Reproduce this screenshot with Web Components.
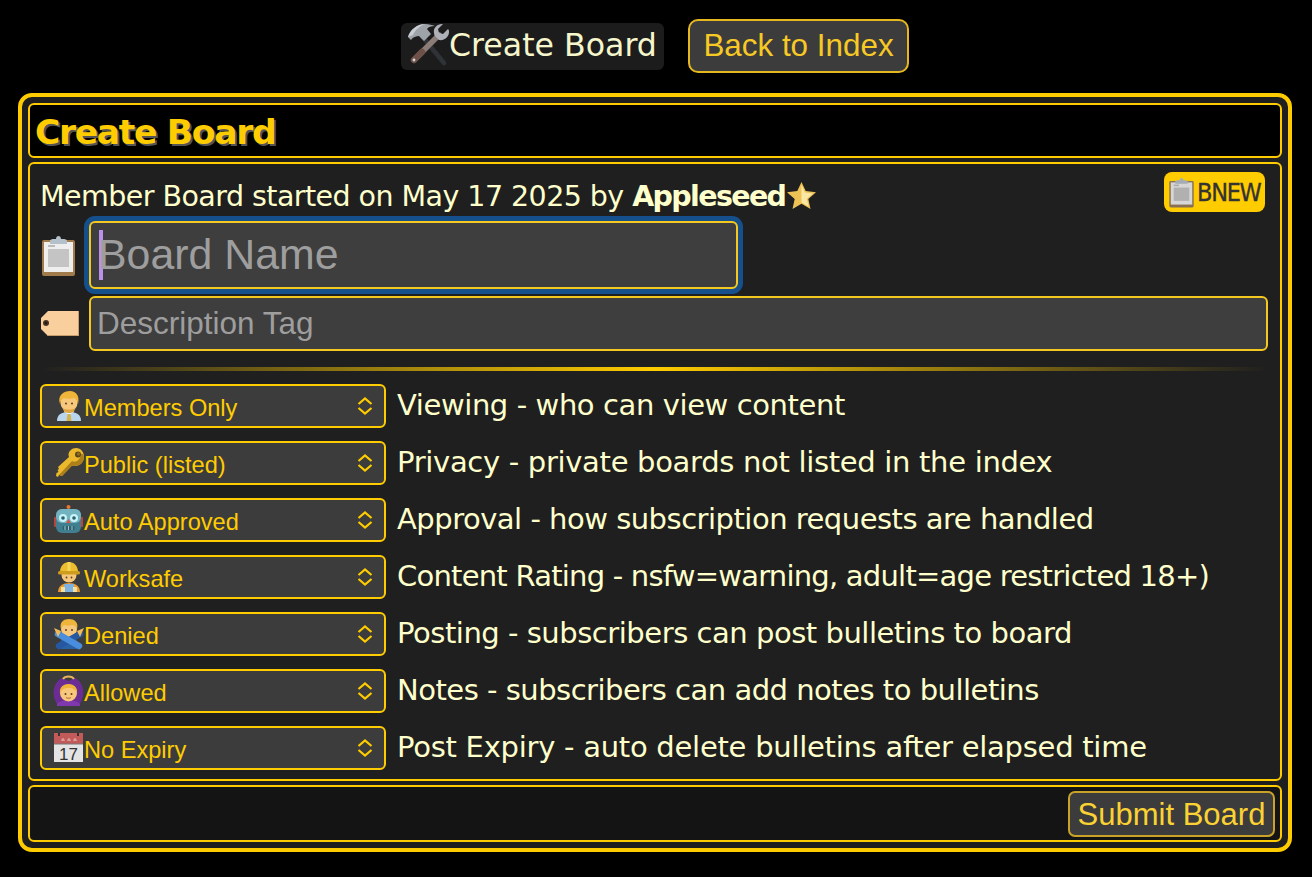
<!DOCTYPE html>
<html lang="en">
<head>
<meta charset="utf-8">
<title>Create Board</title>
<style>
  html, body { margin: 0; background: #000; }
  body { font-family: "DejaVu Sans", sans-serif; color: #ffffcc; }
</style>
</head>
<body>
<board-page></board-page>
<script>
const skin = '#f7c77c', hair = '#eeb53a', eye = '#5a3d22';
const icons = {
  tools: `<path d="M13 11l23 28" stroke="#2f3236" stroke-width="4.500" stroke-linecap="round"/>
    <path d="M0 13C2 6 9 0 17 0c4 0 7 1 10 2-4 0-7 1-8 3l4 5-7 7-5-5c-3 0-6 1-8 4z" fill="#9ea3aa"/><path d="M0 13C2 6 9 0 17 0c-5 2-10 6-12 11z" fill="#c9cdd2"/>
    <path d="M31 11L6 36" stroke="#8b7c78" stroke-width="5.500" stroke-linecap="round"/><path d="M14 28L6 36" stroke="#6d5148" stroke-width="6.500" stroke-linecap="round"/><circle cx="6" cy="36" r="1.400" fill="#d8d8d8"/>
    <path d="M34 0c-5 0-9 4-8 9 0 2 1 3 2 4l3 3c5 1 10-3 10-8 0-1 0-2-1-3l-5 5-4-1-1-4 5-5c0 0-1 0-1 0z" fill="#aeb2b8"/>`,
  clipboard: `<rect x="1" y="5" width="33" height="36" rx="2" fill="#a27b4c"/><rect x="3" y="7" width="29" height="30" fill="#eeeeee"/><rect x="7" y="14" width="21" height="18" fill="#c4c4c4"/><rect x="7" y="10" width="7" height="2" fill="#bbb"/><path d="M9 9V6c0-1 1-2 3-2h3c0-4 5-4 5 0h3c2 0 3 1 3 2v3z" fill="#b4c0ca"/>`,
  tag: `<path d="M8 1h31v25H8L1 19V8z" fill="#f8cf9d"/><path d="M39 1v25H8l-1-1h31V1z" fill="#c69d6c"/><circle cx="6" cy="13" r="3" fill="#4a3324"/><circle cx="6" cy="13" r="1.300" fill="#1b1b1b"/>`,
  star: `<path d="M14.500 0l4.200 9 10.300 1.200-7.700 6.800 2.200 10-9-5.200-9 5.200 2.200-10L0 10.200 10.300 9z" fill="#efc256"/><path d="M14.500 3l3.300 7.500 8 1-6 5.300 1.800 7.700-7.100-4z" fill="#fbe7a4"/>`,
  office: `<path d="M3 30c0-7 5-9 12-9s12 2 12 9z" fill="#b9d6ec"/><path d="M10 21l5 3 5-3-1-2h-8z" fill="#e8f2fa"/><path d="M13.500 23h3l1 7h-5z" fill="#d7b24c"/><circle cx="15" cy="12" r="8.500" fill="${skin}"/><path d="M6 13C3 4 10 0 16 0s10 5 8 13c-1-3-1-5-4-6-3 1-8 1-10 0-3 1-3 3-4 6z" fill="${hair}"/><path d="M9 17c2 2 10 2 12 0 0 4-3 5-6 5s-6-1-6-5z" fill="#dfa53e"/><circle cx="12" cy="12.500" r="1" fill="${eye}"/><circle cx="18" cy="12.500" r="1" fill="${eye}"/>`,
  key: `<path d="M30 9c0 5-4 9-9 9-1 0-2 0-3-.5L8 28l-3-1-1 2-2-1 .5-3 2-1-1-2 1.500-1-1-2L15 9c-.5-1-.5-2-.5-3C15 3 18 0 22 0c5 0 8 4 8 9z" fill="#ecb92c"/><path d="M30 9c0 5-4 9-9 9-1 0-2 0-3-.5L8 28l-3-1L18 13c3 2 8 0 9-7l2 0z" fill="#ad7f1b"/><circle cx="24" cy="6.500" r="3" fill="#5a4518"/><circle cx="24.500" cy="6" r="1.800" fill="#8d6c20"/>`,
  robot: `<circle cx="14.500" cy="2" r="2" fill="#e8772f"/><rect x="0" y="12" width="3" height="10" rx="1" fill="#b6463e"/><rect x="26" y="12" width="3" height="10" rx="1" fill="#b6463e"/><rect x="2" y="4" width="25" height="24" rx="6" fill="#3f7f90"/><rect x="2" y="4" width="25" height="14" rx="6" fill="#73b3bf"/><circle cx="9" cy="13" r="4" fill="#c7f4f9"/><circle cx="20" cy="13" r="4" fill="#c7f4f9"/><circle cx="9" cy="13" r="1.800" fill="#2c5d6a"/><circle cx="20" cy="13" r="1.800" fill="#2c5d6a"/><path d="M14.500 14l2.500 4h-5z" fill="#d6534a"/><rect x="8.500" y="21" width="12" height="4" rx="1" fill="#2f6270"/><path d="M11 21v4M14.500 21v4M18 21v4" stroke="#9fc6cf" stroke-width="1"/>`,
  worker: `<g transform="translate(3 0)"><path d="M1 30c0-6 5-9 11-9s11 3 11 9z" fill="#ec9a2e"/><path d="M7 22h10v8H7z" fill="#7fb2e0"/><path d="M4 25h4v5H4zM16 25h4v5h-4z" fill="#f2e0a0"/><circle cx="12" cy="13" r="7.500" fill="${skin}"/><path d="M3 10C3 4 7 0 12 0s9 4 9 10z" fill="#ecbd2e"/><rect x="1" y="9" width="22" height="3.500" rx="1.500" fill="#cf9d1e"/><rect x="10.500" y="0" width="3" height="9" fill="#f5d659"/><circle cx="9.500" cy="15.500" r=".9" fill="${eye}"/><circle cx="14.500" cy="15.500" r=".9" fill="${eye}"/></g>`,
  denied: `<path d="M7 30c-2-3-1-8 2-11h12c3 3 4 8 2 11z" fill="#2a62a8"/><circle cx="15" cy="10" r="8" fill="${skin}"/><path d="M7 10C5 3 10 0 15 0s10 3 8 10c-1-2-2-4-5-4-3 1-5 1-7 0-2 0-3 2-4 4z" fill="${hair}"/><circle cx="12" cy="11" r="1" fill="${eye}"/><circle cx="18" cy="11" r="1" fill="${eye}"/><path d="M26 15L5 27" stroke="#2558a0" stroke-width="6.500" stroke-linecap="round"/><path d="M4 15l21 12" stroke="#4a8edb" stroke-width="6.500" stroke-linecap="round"/><path d="M0 9l7 3-3 6zM30 9l-7 3 3 6z" fill="#f0b95c"/>`,
  allowed: `<path d="M5 30C-3 22-2 7 8 2l6.500 3L21 2c10 5 11 20 3 28z" fill="#6b2c94"/><path d="M3 30h23v-2c-3-5-20-5-23 0z" fill="#7f38ad"/><circle cx="14.500" cy="17" r="8.500" fill="${skin}"/><path d="M6 17c-1-6 4-9 8.500-9s9.500 3 8.500 9c-1-3-4-5-8.500-5s-7.500 2-8.500 5z" fill="${hair}"/><path d="M9 3c2-3.500 9-3.500 11 0" fill="none" stroke="#e8b45c" stroke-width="2"/><circle cx="11.500" cy="18" r="1" fill="${eye}"/><circle cx="17.500" cy="18" r="1" fill="${eye}"/><path d="M12 21.500c1 1 4 1 5 0" stroke="#b5653a" fill="none"/>`,
  calendar: `<rect x="0" y="0" width="29" height="11" fill="#c25a5a"/><rect x="0" y="11" width="29" height="18" fill="#e4e4e4"/><path d="M5 0v3M24 0v3" stroke="#333" stroke-width="2"/><path d="M7 8c1-4 3-4 4 0zM13 8c1-4 3-4 4 0zM19 8c1-4 3-4 4 0z" fill="#dd9a9a"/><path d="M0 11h29" stroke="#777"/><text x="14.500" y="27" font-family="Liberation Sans" font-size="17" fill="#333" text-anchor="middle">17</text>`
};

class BoardEmoji extends HTMLElement {
  static get observedAttributes() { return ['name']; }
  constructor() {
    super();
    this.attachShadow({ mode: 'open' });
  }
  connectedCallback() { this.render(); }
  attributeChangedCallback() { this.render(); }
  render() {
    const w = this.getAttribute('w') || 30, h = this.getAttribute('h') || 30;
    this.shadowRoot.innerHTML = `<style>:host{display:inline-flex;flex:none;width:${w}px;height:${h}px}svg{display:block;overflow:visible}</style>
      <svg width="${w}" height="${h}" viewBox="0 0 ${w} ${h}">${icons[this.getAttribute('name')] || ''}</svg>`;
  }
}
customElements.define('board-emoji', BoardEmoji);

class BoardButton extends HTMLElement {
  constructor() {
    super();
    this.attachShadow({ mode: 'open' }).innerHTML = `<style>
      :host{display:inline-flex;align-items:center;justify-content:center;box-sizing:border-box;background:#3c3c3c;border:2px solid #e6b820;color:#f7c925;font-family:"Liberation Sans",Arial,sans-serif;white-space:nowrap}
    </style><slot></slot>`;
  }
}
customElements.define('board-button', BoardButton);

class BoardPanel extends HTMLElement {
  constructor() {
    super();
    this.attachShadow({ mode: 'open' }).innerHTML = `<style>
      :host{display:block;box-sizing:border-box;border:2px solid #fc0;border-radius:6px;background:var(--panel-bg,#1f1f1f)}
    </style><slot></slot>`;
  }
}
customElements.define('board-panel', BoardPanel);

class BoardField extends HTMLElement {
  constructor() {
    super();
    this.attachShadow({ mode: 'open' }).innerHTML = `<style>
      :host{display:flex;align-items:center;box-sizing:border-box;background:#3e3e3e;border:2px solid #f4c81f;border-radius:6px;color:#9e9e9e;font-family:"Liberation Sans",Arial,sans-serif;white-space:nowrap}
      :host([focused]){box-shadow:0 0 0 5px #15508c}
      i{display:none;width:4px;height:50px;background:#bb90ea;margin-right:-5px;flex:none}
      :host([focused]) i{display:block}
      span{display:block;margin-top:var(--text-shift,0)}
    </style><i></i><span><slot></slot></span>`;
  }
}
customElements.define('board-field', BoardField);

class BoardOption extends HTMLElement {
  constructor() {
    super();
    this.attachShadow({ mode: 'open' }).innerHTML = `<style>
      :host{display:flex;align-items:center;gap:11px;height:44px;font-size:29px;color:#ffffcc}
      .select{display:flex;align-items:center;box-sizing:border-box;flex:none;width:346px;height:44px;padding:0 12px;background:#3c3c3c;border:2px solid #fc0;border-radius:6px;color:#fc0;font-family:"Liberation Sans",Arial,sans-serif;font-size:23.600px}
      .text{flex:1;margin:4px 0 0 0;white-space:nowrap}
      svg{flex:none;margin-right:-1px}
      .help{margin-top:-3px;white-space:nowrap;letter-spacing:var(--track,0)}
    </style>
    <div class="select"><board-emoji id="e"></board-emoji><span class="text" id="t"></span>
      <svg width="16" height="18" viewBox="0 0 16 18" fill="none" stroke="#fc0" stroke-width="2.200"><path d="M1.500 7L8 1.500 14.500 7M1.500 11L8 16.500 14.500 11"/></svg></div>
    <span class="help"><slot></slot></span>`;
  }
  connectedCallback() {
    this.shadowRoot.getElementById('e').setAttribute('name', this.getAttribute('emoji'));
    this.shadowRoot.getElementById('t').textContent = this.getAttribute('value');
    this.style.setProperty('--track', (this.getAttribute('track') || 0) + 'px');
  }
}
customElements.define('board-option', BoardOption);

class BoardPage extends HTMLElement {
  constructor() {
    super();
    this.attachShadow({ mode: 'open' }).innerHTML = `<style>
      :host{display:block;font-family:"DejaVu Sans",sans-serif;color:#ffffcc}
      header{display:flex;justify-content:center;align-items:center;gap:24px;height:93px;padding:0 2px 1px 0;box-sizing:border-box}
      .chip{display:flex;align-items:center;box-sizing:border-box;width:263px;height:47px;padding:0 0 3px 7px;background:#1c1c1c;border-radius:6px;font-size:31.600px;white-space:nowrap;margin-top:1px;color:#f6f6cc}
      .chip span{margin-left:-1px}
      .back{width:221px;height:54px;border-radius:10px;font-size:31.400px}
      .outer{box-sizing:border-box;width:1274px;height:759px;margin-left:18px;border:4px solid #fc0;border-radius:14px;background:#1f1f1f;padding:6px;display:flex;flex-direction:column;gap:4px}
      .title{--panel-bg:#000;height:55px;display:flex;align-items:center;padding:3px 0 0 5px;box-sizing:border-box}
      h1{margin:0;font-size:34.500px;font-weight:700;color:#fc0;text-shadow:2px 2px 0 #555;white-space:nowrap;letter-spacing:-1.300px}
      .main{flex:1;padding:8px 12px 9px 10px}
      .info{display:flex;justify-content:space-between;align-items:flex-start;height:40px;font-size:28.500px;white-space:nowrap}
      .info .meta{display:flex;align-items:center;height:48px;letter-spacing:-.55px}
      .info b{font-weight:700;letter-spacing:-1.650px}
      .info board-emoji{margin:2px 0 0 2px}
      .badge{display:flex;align-items:center;box-sizing:border-box;width:101px;height:40px;margin-right:3px;padding-left:5px;background:#fc0;border-radius:8px;color:#333;font-family:"DejaVu Sans Condensed","DejaVu Sans",sans-serif;font-size:25px;letter-spacing:-1.300px;-webkit-text-stroke:.3px #333}
      .badge board-emoji{transform:scale(.74);transform-origin:center;margin:0 -2px 0 -5px;filter:brightness(.9) saturate(.7)}
      .row{display:flex;align-items:center}
      .name{width:649px;height:68px;font-size:42.850px;padding-left:8px;--text-shift:-2px}
      .desc{flex:1;height:55px;font-size:31.500px;padding-left:6px}
      .r1 board-emoji{margin:0 10px 0 1px}
      .r2 board-emoji{margin:0 9px 0 0}
      .r1{margin-top:9px}
      .r2{margin-top:7px}
      .rule{height:4px;margin:16px 0 13px;background:linear-gradient(90deg,transparent,#fc0 50%,transparent)}
      .rows{display:flex;flex-direction:column;gap:13px}
      .foot{--panel-bg:#141414;height:57px;display:flex;align-items:center;justify-content:flex-end;padding-right:5px;box-sizing:border-box}
      .submit{width:207px;height:46px;border-radius:7px;font-size:31px;border-color:#c9a227;color:#fbd233;padding-top:2px}
    </style>
    <header>
      <div class="chip"><board-emoji name="tools" w="42" h="42"></board-emoji><span>Create Board</span></div>
      <board-button class="back">Back to Index</board-button>
    </header>
    <div class="outer">
      <board-panel class="title"><h1>Create Board</h1></board-panel>
      <board-panel class="main">
        <div class="info">
          <div class="meta"><span>Member Board started on May 17 2025 by <b>Appleseed</b></span><board-emoji name="star"></board-emoji></div>
          <div class="badge"><board-emoji name="clipboard" w="35" h="40"></board-emoji><span>BNEW</span></div>
        </div>
        <div class="row r1"><board-emoji name="clipboard" w="38" h="40"></board-emoji><board-field class="name" focused>Board Name</board-field></div>
        <div class="row r2"><board-emoji name="tag" w="40" h="28"></board-emoji><board-field class="desc">Description Tag</board-field></div>
        <div class="rule"></div>
        <div class="rows">
          <board-option emoji="office" value="Members Only" track="-.4">Viewing - who can view content</board-option>
          <board-option emoji="key" value="Public (listed)" track="-.31">Privacy - private boards not listed in the index</board-option>
          <board-option emoji="robot" value="Auto Approved" track="-.5">Approval - how subscription requests are handled</board-option>
          <board-option emoji="worker" value="Worksafe" track="-.77">Content Rating - nsfw=warning, adult=age restricted 18+)</board-option>
          <board-option emoji="denied" value="Denied" track="-.47">Posting - subscribers can post bulletins to board</board-option>
          <board-option emoji="allowed" value="Allowed" track="-.5">Notes - subscribers can add notes to bulletins</board-option>
          <board-option emoji="calendar" value="No Expiry" track="-.26">Post Expiry - auto delete bulletins after elapsed time</board-option>
        </div>
      </board-panel>
      <board-panel class="foot"><board-button class="submit">Submit Board</board-button></board-panel>
    </div>`;
  }
}
customElements.define('board-page', BoardPage);
</script>
</body>
</html>
